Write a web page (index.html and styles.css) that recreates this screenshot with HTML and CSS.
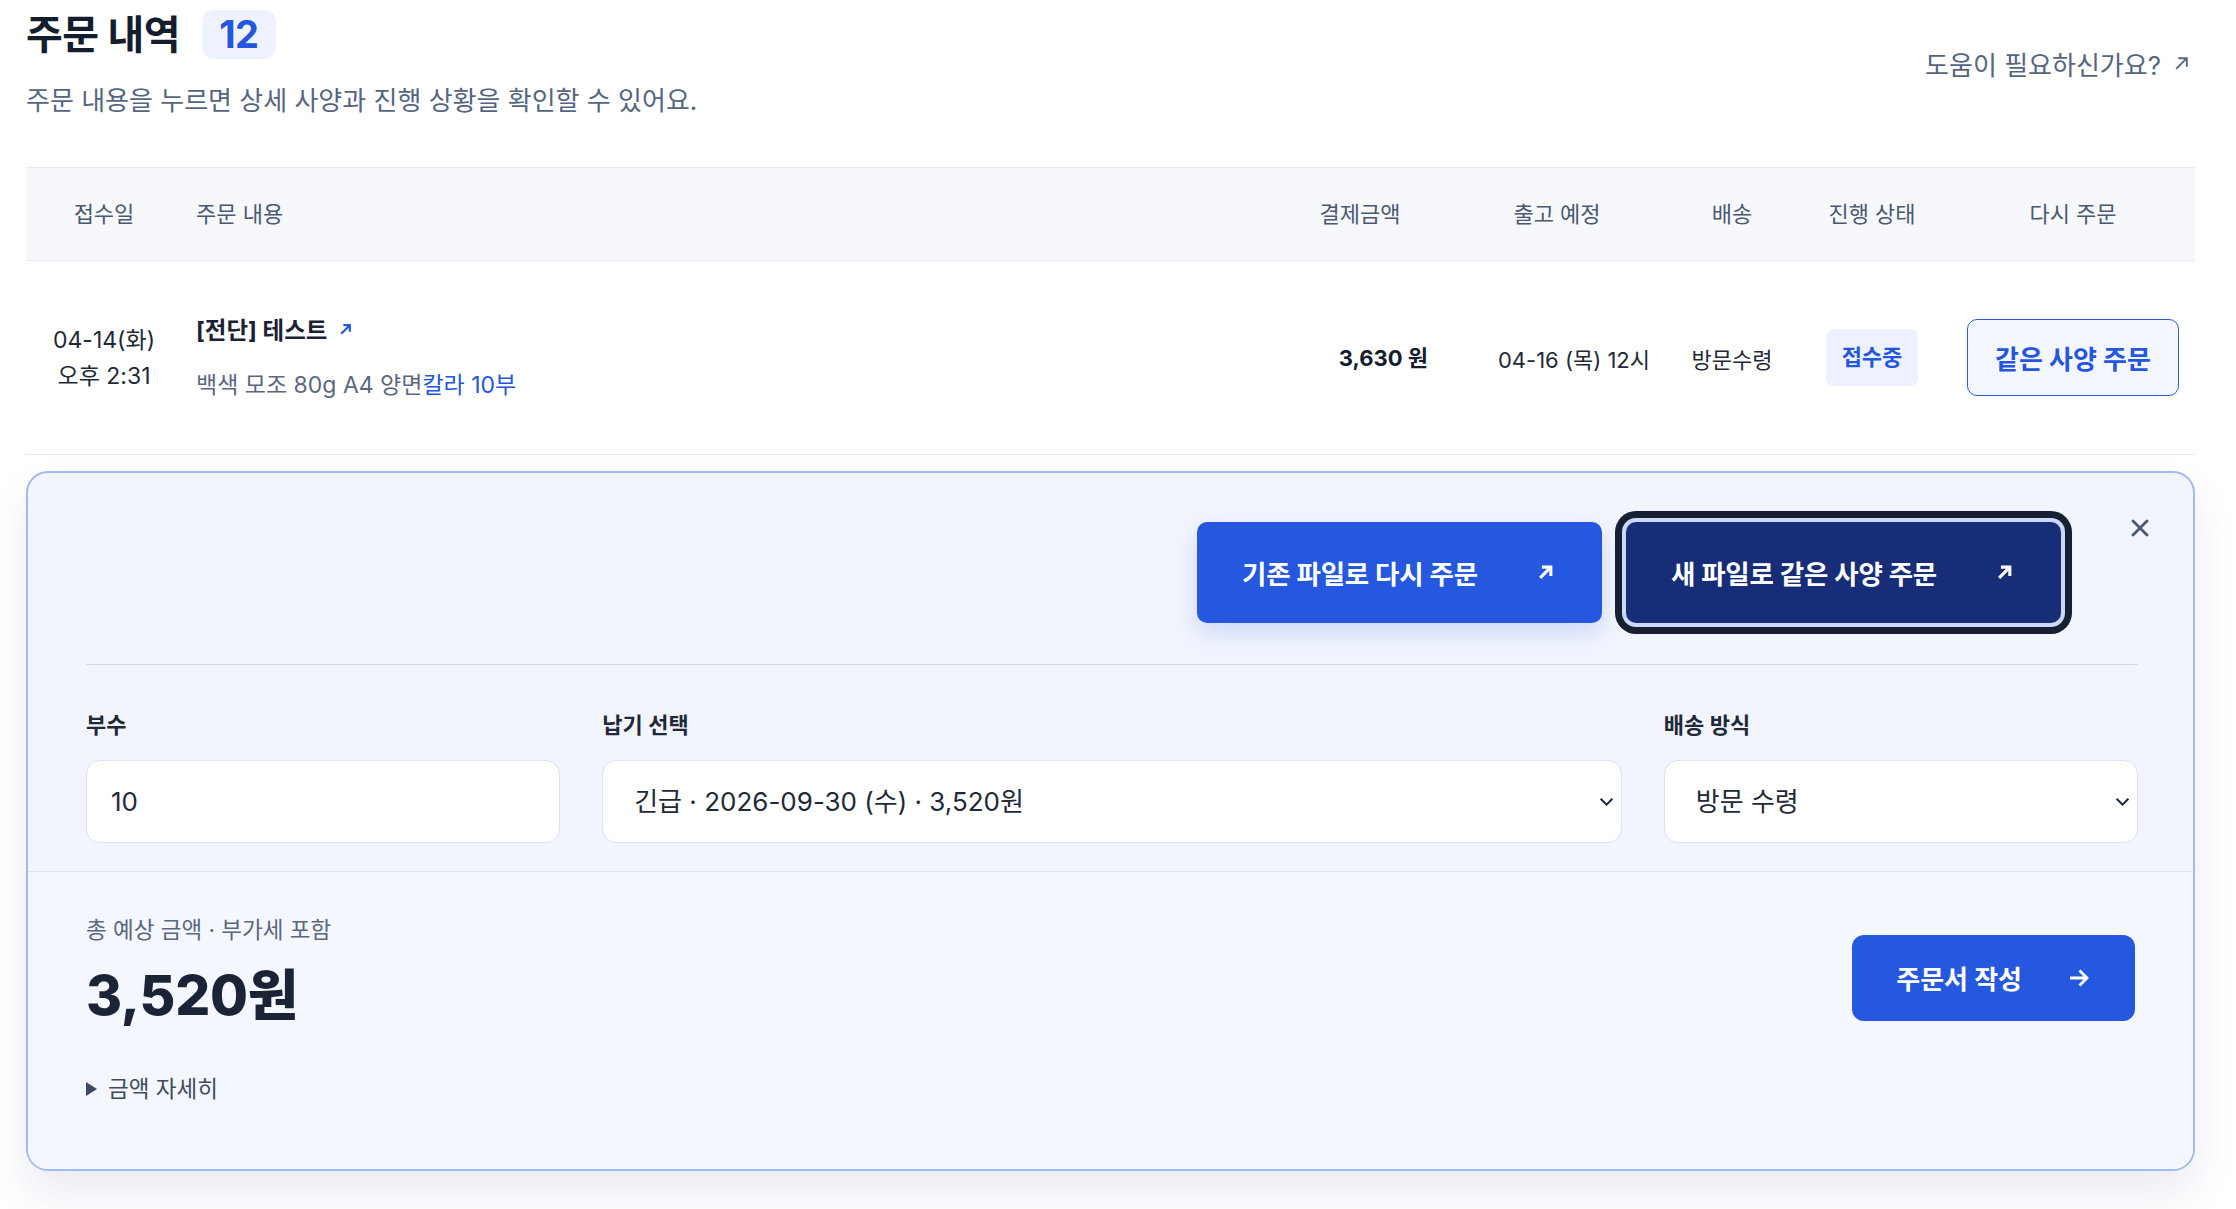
FILE: index.html
```html
<!DOCTYPE html>
<html lang="ko">
<head>
    <meta charset="UTF-8">
    <meta name="viewport" content="width=device-width, initial-scale=1.0">
    <title>주문 내역</title>
    <link rel="stylesheet" href="styles.css">
</head>
<body>
    <div class="page">
        <header class="page-head">
            <div>
                <h1 class="title">주문 내역 <span class="count">12</span></h1>
                <p class="subtitle">주문 내용을 누르면 상세 사양과 진행 상황을 확인할 수 있어요.</p>
            </div>
            <a class="help" href="#">도움이 필요하신가요?
                <svg width="17" height="17" viewBox="0 0 16 16"><path d="M3 13L13 3M5 3h8v8" fill="none" stroke="currentColor" stroke-width="1.8"/></svg>
            </a>
        </header>

        <div class="orders">
            <div class="row row-head">
                <div class="c-date">접수일</div>
                <div class="c-item">주문 내용</div>
                <div class="c-price">결제금액</div>
                <div class="c-ship">출고 예정</div>
                <div class="c-deliv">배송</div>
                <div class="c-state">진행 상태</div>
                <div class="c-again">다시 주문</div>
            </div>
            <div class="row row-body">
                <div class="c-date">
                    <div>04-14(화)</div>
                    <div>오후 2:31</div>
                </div>
                <div class="c-item">
                    <div class="item-name">[전단] 테스트
                        <svg width="13" height="13" viewBox="0 0 12 12"><path d="M2 10L10 2M4 2h6v6" fill="none" stroke="#2456df" stroke-width="2"/></svg>
                    </div>
                    <div class="item-spec">백색 모조 80g A4 양면<span class="accent">칼라 10부</span></div>
                </div>
                <div class="c-price value-price">3,630 원</div>
                <div class="c-ship value-ship">04-16 (목) 12시</div>
                <div class="c-deliv">방문수령</div>
                <div class="c-state"><span class="badge">접수중</span></div>
                <div class="c-again"><button class="btn-outline" type="button">같은 사양 주문</button></div>
            </div>
        </div>

        <section class="reorder">
            <button class="close" type="button" aria-label="닫기">
                <svg width="20" height="20" viewBox="0 0 20 20"><path d="M3 3l14 14M17 3L3 17" stroke="#4b5872" stroke-width="2.8" stroke-linecap="round"/></svg>
            </button>
            <div class="reorder-top">
                <div class="actions">
                    <button class="btn btn-blue" type="button">기존 파일로 다시 주문
                        <svg width="19" height="19" viewBox="0 0 16 16"><path d="M3.5 12.5L12.5 3.5M5 3.5H12.5v7.5" fill="none" stroke="#fff" stroke-width="2.6"/></svg>
                    </button>
                    <button class="btn btn-navy" type="button">새 파일로 같은 사양 주문
                        <svg width="19" height="19" viewBox="0 0 16 16"><path d="M3.5 12.5L12.5 3.5M5 3.5H12.5v7.5" fill="none" stroke="#fff" stroke-width="2.6"/></svg>
                    </button>
                </div>
                <div class="form">
                    <label class="field">
                        <span class="label">부수</span>
                        <input class="control" type="text" value="10">
                    </label>
                    <label class="field">
                        <span class="label">납기 선택</span>
                        <span class="select-wrap">
                            <select class="control">
                                <option>긴급 · 2026-09-30 (수) · 3,520원</option>
                            </select>
                            <svg class="chev" width="15" height="10" viewBox="0 0 14 9"><path d="M1.5 1.5l5.5 5.5 5.5-5.5" fill="none" stroke="#1f2937" stroke-width="1.9"/></svg>
                        </span>
                    </label>
                    <label class="field">
                        <span class="label">배송 방식</span>
                        <span class="select-wrap">
                            <select class="control">
                                <option>방문 수령</option>
                            </select>
                            <svg class="chev" width="15" height="10" viewBox="0 0 14 9"><path d="M1.5 1.5l5.5 5.5 5.5-5.5" fill="none" stroke="#1f2937" stroke-width="1.9"/></svg>
                        </span>
                    </label>
                </div>
            </div>
            <div class="summary">
                <div class="summary-row">
                    <div>
                        <div class="total-label">총 예상 금액 · 부가세 포함</div>
                        <div class="total">3,520원</div>
                    </div>
                    <button class="btn btn-submit" type="button">주문서 작성
                        <svg width="22" height="20" viewBox="0 0 22 20"><path d="M2 10h17M11.5 2.5L19 10l-7.5 7.5" fill="none" stroke="#fff" stroke-width="2.8"/></svg>
                    </button>
                </div>
                <div class="details">
                    <svg width="11" height="14" viewBox="0 0 11 14"><path d="M0 0l11 7-11 7z" fill="#3e4a60"/></svg>
                    금액 자세히
                </div>
            </div>
        </section>
    </div>
</body>
</html>
```

FILE: styles.css
```css
body {
    margin: 0;
    background: #fff;
    font-family: Inter, "Noto Sans CJK KR", sans-serif;
    color: #1b2437;
}
.page {
    padding: 10px 41px 40px 26px;
}
.page-head {
    display: flex;
    justify-content: space-between;
    align-items: center;
}
.title {
    margin: 0;
    display: flex;
    align-items: center;
    gap: 22px;
    font-size: 40px;
    line-height: 49px;
    font-weight: 700;
    color: #141d2e;
    letter-spacing: -0.5px;
}
.count {
    display: inline-block;
    padding: 0 17px;
    border-radius: 12px;
    background: #eef2fe;
    color: #2456df;
    font-family: Inter, sans-serif;
    font-size: 38px;
    line-height: 49px;
}
.subtitle {
    margin: 24px 0 0;
    font-size: 26px;
    line-height: 36px;
    color: #56657f;
}
.help {
    display: flex;
    align-items: center;
    gap: 12px;
    margin-right: 5px;
    margin-bottom: 2px;
    font-size: 26px;
    color: #56657f;
    text-decoration: none;
}

.orders {
    margin-top: 48px;
}
.row {
    display: grid;
    grid-template-columns: 156px 1fr 150px 244px 106px 174px 228px;
    padding-right: 8px;
    align-items: center;
    font-size: 22px;
}
.row > div {
    text-align: center;
}
.row-head {
    height: 92px;
    background: #f6f8fb;
    border-top: 1px solid #e6eaf0;
    border-bottom: 1px solid #e6eaf0;
    color: #4b5872;
}
.row-head > div {
    padding-bottom: 4px;
}
.row-body {
    height: 193px;
    border-bottom: 1px solid #e6eaf0;
    color: #1f2937;
}
.row .c-item {
    text-align: left;
    padding-left: 14px;
}
.c-date div {
    font-size: 23px;
    line-height: 36px;
}
.item-name {
    font-size: 23.5px;
    font-weight: 700;
    line-height: 32px;
    color: #1a2233;
}
.item-name svg {
    margin-left: 6px;
    vertical-align: 3px;
}
.item-spec {
    margin-top: 22px;
    font-size: 23px;
    line-height: 32px;
    color: #5b6780;
}
.accent {
    color: #2456df;
}
.row .value-price {
    text-align: right;
    padding-right: 7px;
    padding-bottom: 4px;
    font-weight: 700;
    color: #141d2e;
}
.row .value-ship {
    padding-left: 34px;
}
.badge {
    display: inline-block;
    padding: 0 16px;
    line-height: 57px;
    border-radius: 8px;
    background: #edf2fe;
    color: #2456df;
    font-weight: 700;
}
.btn-outline {
    height: 77px;
    padding: 0 27px;
    border: 1.5px solid #2d5be0;
    border-radius: 10px;
    background: #f4f7ff;
    color: #2456df;
    font-family: inherit;
    font-size: 26px;
    font-weight: 700;
}

.reorder {
    position: relative;
    margin-top: 16px;
    border: 2px solid #a3b9f2;
    border-radius: 22px;
    background: #f2f5fe;
    box-shadow: 0 22px 40px rgba(40, 70, 150, 0.1);
    overflow: hidden;
}
.close {
    position: absolute;
    top: 35px;
    right: 33px;
    width: 40px;
    height: 40px;
    padding: 0;
    border: none;
    background: none;
    display: flex;
    align-items: center;
    justify-content: center;
}
.reorder-top {
    padding: 49px 55px 28px 58px;
}
.actions {
    display: flex;
    justify-content: flex-end;
    gap: 24px;
    padding-right: 77px;
    padding-bottom: 41px;
    border-bottom: 1px solid #cdd8ef;
}
.btn {
    display: inline-flex;
    align-items: center;
    border: none;
    color: #fff;
    font-family: inherit;
    font-weight: 700;
    cursor: pointer;
}
.btn-blue,
.btn-navy {
    height: 101px;
    padding: 0 47px 0 45px;
    gap: 58px;
    border-radius: 10px;
    font-size: 26.5px;
    letter-spacing: -0.2px;
}
.btn-blue {
    background: #2558df;
    box-shadow: 0 10px 24px rgba(37, 88, 224, 0.18);
}
.btn-navy {
    background: #172d78;
    box-shadow: 0 0 0 4px #cbd7fb, 0 0 0 11px #172033;
}
.form {
    display: grid;
    grid-template-columns: 1fr 2.15fr 1fr;
    gap: 42px;
    padding-top: 45px;
}
.field {
    display: flex;
    flex-direction: column;
    gap: 20px;
}
.label {
    font-size: 22px;
    line-height: 30px;
    font-weight: 600;
    color: #1f2937;
}
.control {
    box-sizing: border-box;
    width: 100%;
    height: 83px;
    padding: 0 24px;
    border: 1px solid #dbe2ef;
    border-radius: 14px;
    background: #fff;
    font-family: inherit;
    font-size: 26px;
    color: #1f2937;
    outline: none;
}
select.control {
    appearance: none;
    padding-left: 31px;
}
.select-wrap {
    position: relative;
    display: block;
}
.chev {
    position: absolute;
    right: 8px;
    top: 37px;
}

.summary {
    border-top: 1px solid #dfe5f0;
    background: #f4f7fd;
    padding: 43px 58px 65px 58px;
}
.summary-row {
    display: flex;
    justify-content: space-between;
    align-items: center;
}
.total-label {
    font-size: 22.5px;
    line-height: 30px;
    color: #5b6780;
}
.total {
    margin-top: 15px;
    font-size: 55px;
    line-height: 70px;
    font-weight: 800;
    color: #1b2437;
    letter-spacing: -0.3px;
}
.btn-submit {
    height: 86px;
    padding: 0 45px 0 44px;
    gap: 46px;
    border-radius: 12px;
    background: #2558df;
    font-size: 26px;
    margin-top: 10px;
}
.details {
    display: flex;
    align-items: center;
    gap: 11px;
    margin-top: 44px;
    font-size: 22.5px;
    line-height: 30px;
    color: #3e4a60;
}
```
